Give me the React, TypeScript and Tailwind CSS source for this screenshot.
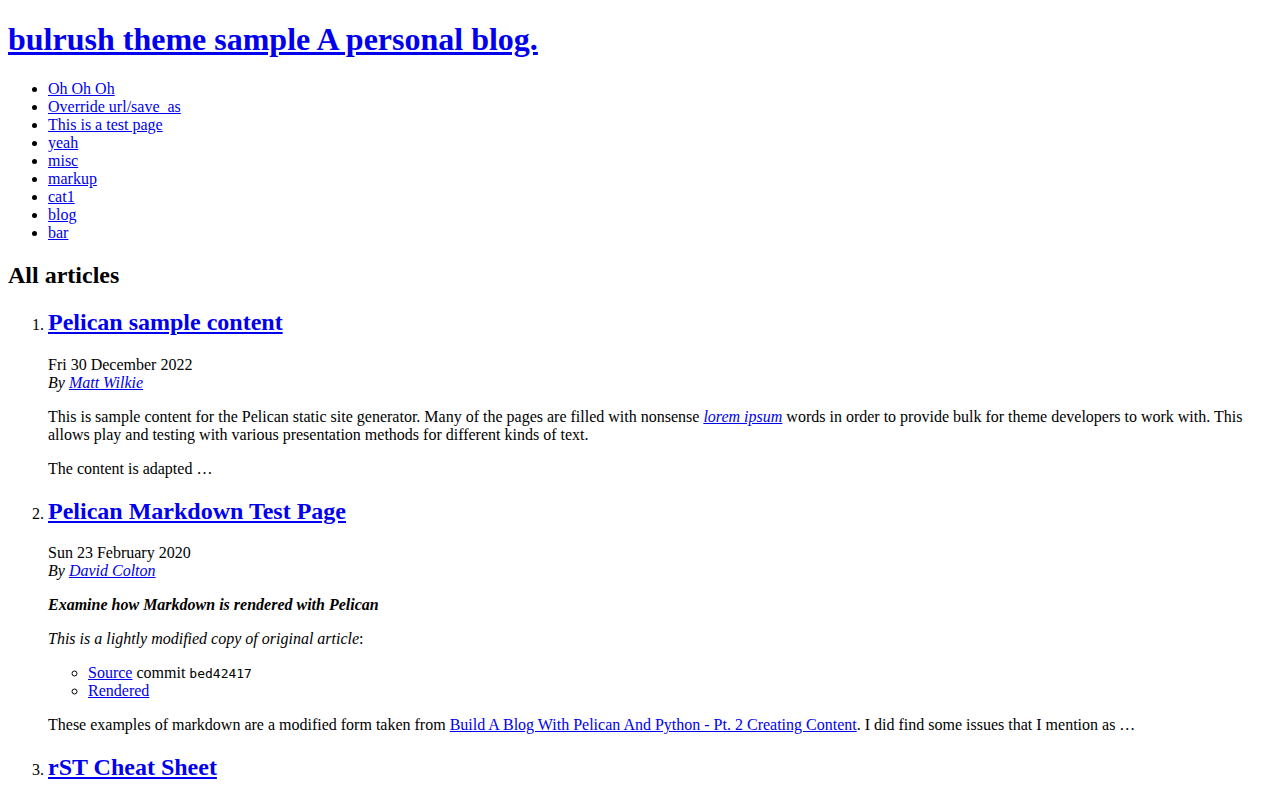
import React from 'react';

const navItems = ['Oh Oh Oh', 'Override url/save_as', 'This is a test page', 'yeah', 'misc', 'markup', 'cat1', 'blog', 'bar'];

const Link: React.FC<{ children: React.ReactNode }> = ({ children }) => (
  <a href="#" className="text-[#0000EE] underline">
    {children}
  </a>
);

const ArticleTitle: React.FC<{ title: string }> = ({ title }) => (
  <h2 className="text-[24px] font-bold my-[19.92px]">
    <Link>{title}</Link>
  </h2>
);

const App: React.FC = () => {
  return (
    <div className="m-2 font-['Liberation_Serif',serif] text-[16px] leading-[normal] text-black bg-white">
      {/* Site header */}
      <h1 className="text-[32px] font-bold my-[21.44px]">
        <Link>bulrush theme sample A personal blog.</Link>
      </h1>

      <ul className="list-disc pl-10 my-4">
        {navItems.map((item) => (
          <li key={item}>
            <Link>{item}</Link>
          </li>
        ))}
      </ul>

      <h2 className="text-[24px] font-bold my-[19.92px]">All articles</h2>

      <ol className="list-decimal pl-10 my-4">
        <li>
          <ArticleTitle title="Pelican sample content" />
          <div>Fri 30 December 2022</div>
          <address className="italic">
            By <Link>Matt Wilkie</Link>
          </address>
          <p className="my-4">
            This is sample content for the Pelican static site generator. Many of the pages are filled with nonsense{' '}
            <em>
              <Link>lorem ipsum</Link>
            </em>{' '}
            words in order to provide bulk for theme developers to work with. This allows play and testing with various
            presentation methods for different kinds of text.
          </p>
          <p className="my-4">The content is adapted …</p>
        </li>

        <li>
          <ArticleTitle title="Pelican Markdown Test Page" />
          <div>Sun 23 February 2020</div>
          <address className="italic">
            By <Link>David Colton</Link>
          </address>
          <p className="my-4">
            <strong className="italic font-bold">Examine how Markdown is rendered with Pelican</strong>
          </p>
          <p className="my-4">
            <em>This is a lightly modified copy of original article</em>:
          </p>
          <ul className="list-[circle] pl-10">
            <li>
              <Link>Source</Link> commit <code className="font-['DejaVu_Sans_Mono',monospace] text-[13px]">bed42417</code>
            </li>
            <li>
              <Link>Rendered</Link>
            </li>
          </ul>
          <p className="my-4">
            These examples of markdown are a modified form taken from{' '}
            <Link>Build A Blog With Pelican And Python - Pt. 2 Creating Content</Link>. I did find some issues that I
            mention as …
          </p>
        </li>

        <li>
          <ArticleTitle title="rST Cheat Sheet" />
          <div>Sat 01 February 2020</div>
          <address className="italic">
            By <Link>Matt Wilkie</Link>
          </address>
          <p className="my-4">A cheat sheet for reStructuredText markup …</p>
        </li>
      </ol>
    </div>
  );
};

export default App;
